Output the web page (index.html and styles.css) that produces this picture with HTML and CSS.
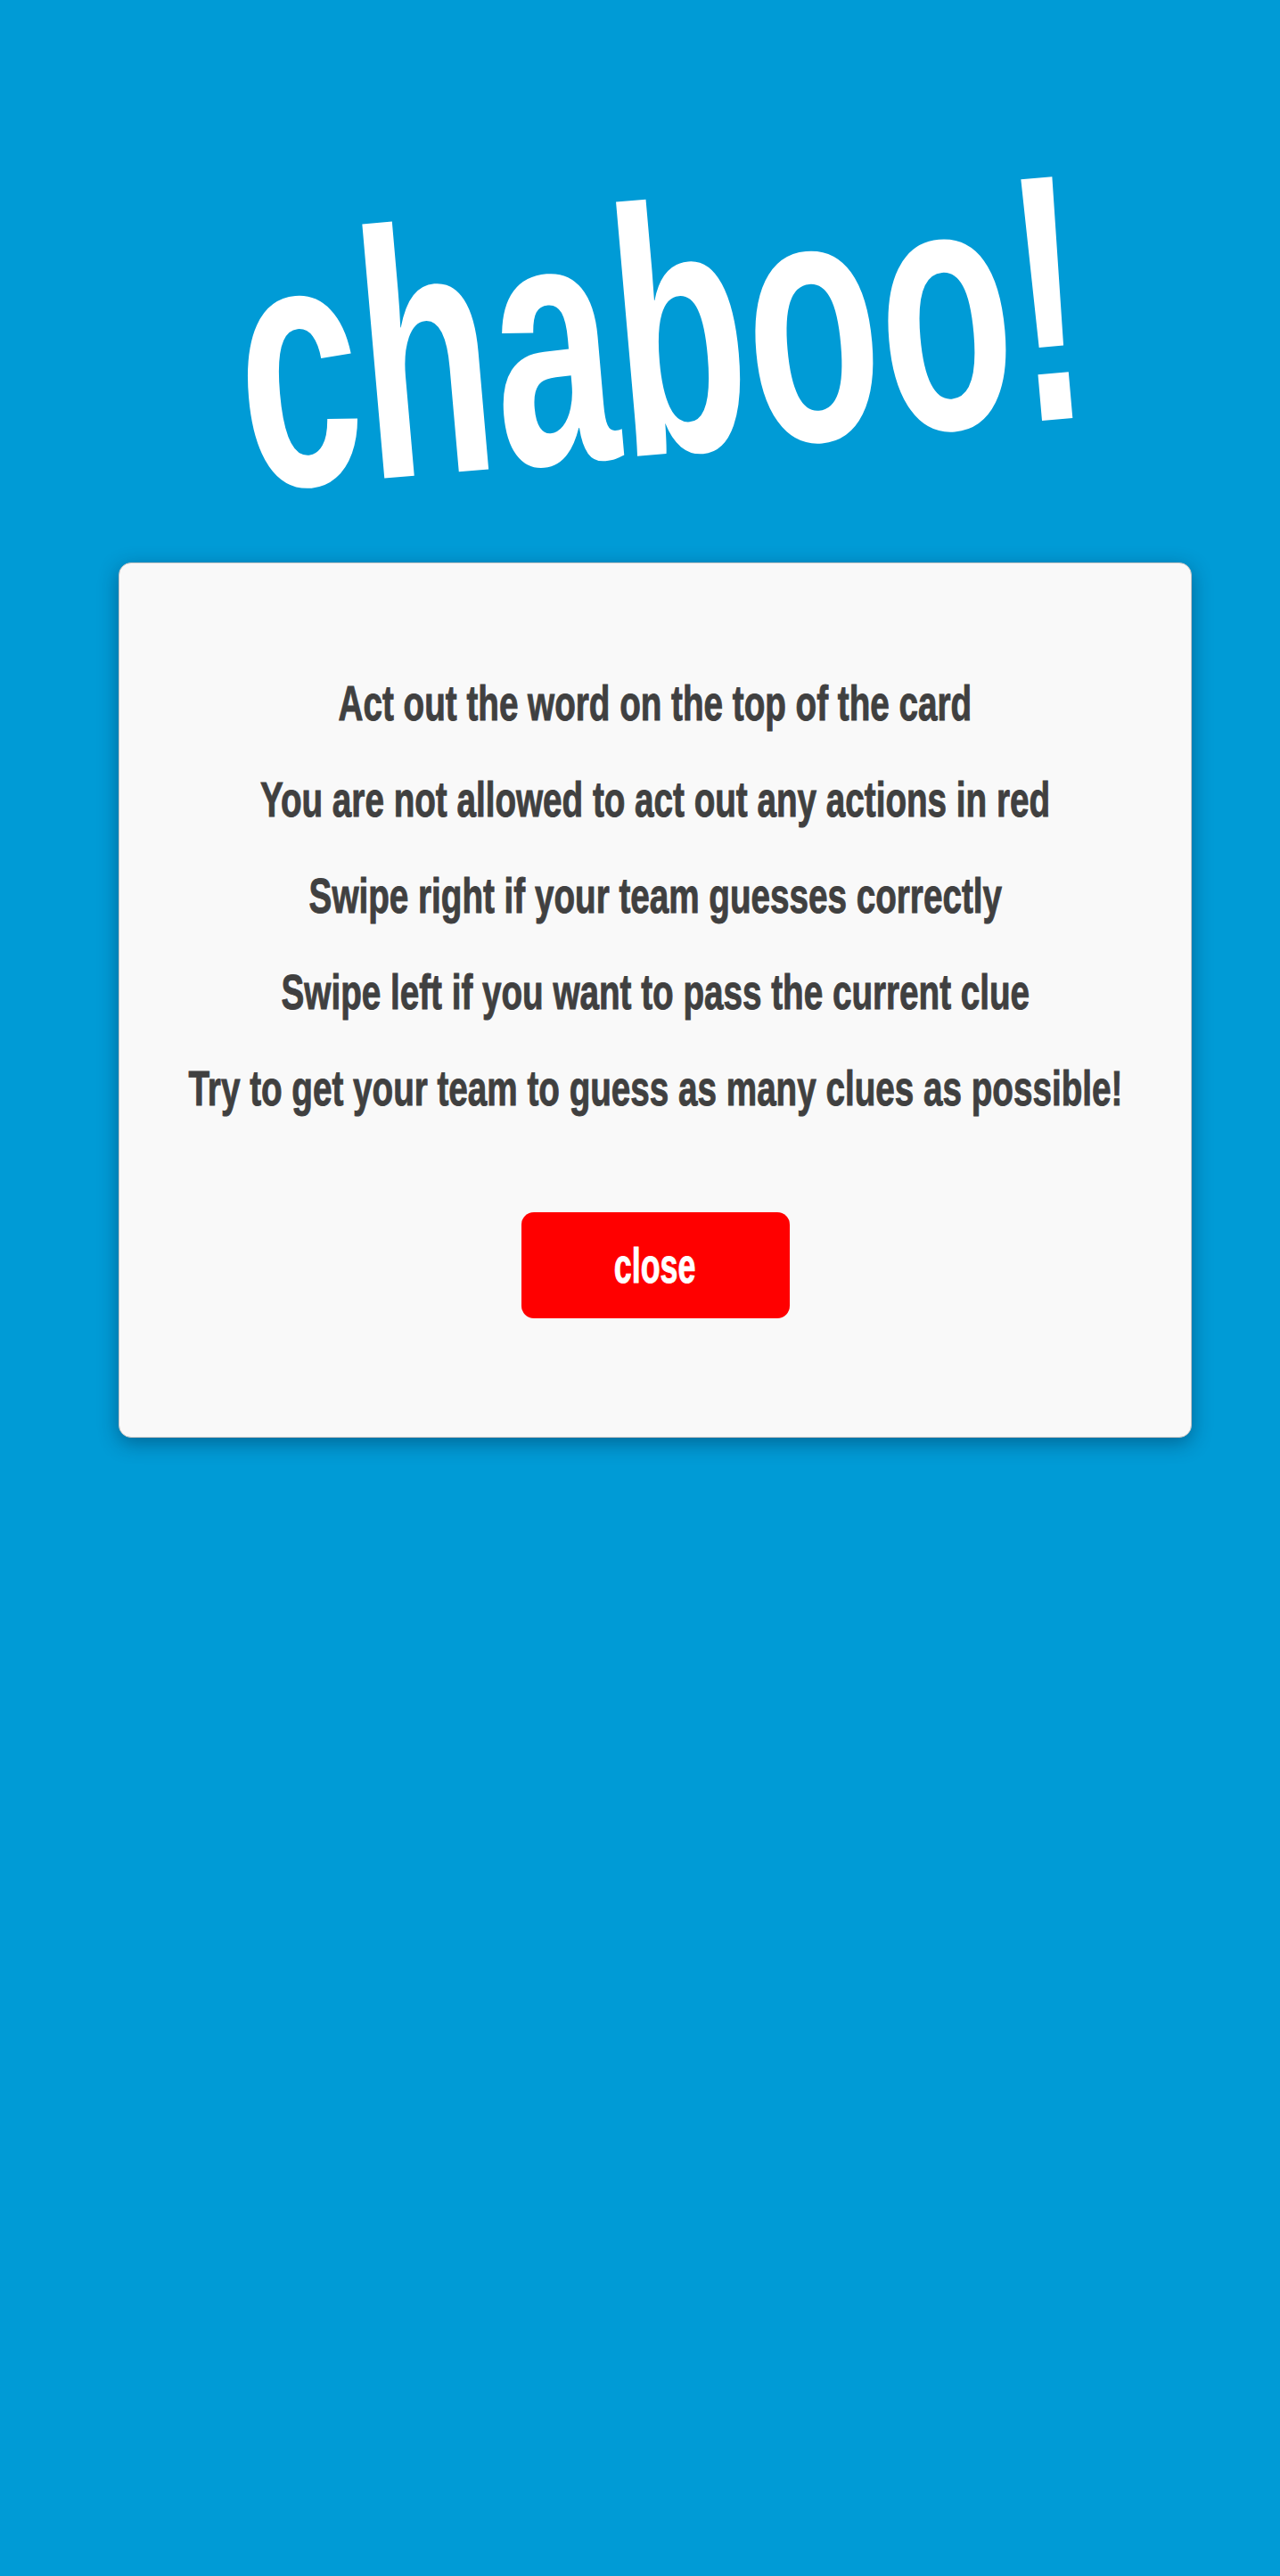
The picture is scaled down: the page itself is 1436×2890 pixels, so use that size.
FILE: index.html
```html
<!DOCTYPE html>
<html lang="en">
<head>
<meta charset="utf-8">
<title>chaboo!</title>
<link rel="stylesheet" href="styles.css">
</head>
<body>
<header class="masthead">
  <h1 class="logo">chaboo!</h1>
</header>
<main class="card">
  <div class="rules">
    <p class="rule">Act out the word on the top of the card</p>
    <p class="rule">You are not allowed to act out any actions in red</p>
    <p class="rule">Swipe right if your team guesses correctly</p>
    <p class="rule">Swipe left if you want to pass the current clue</p>
    <p class="rule">Try to get your team to guess as many clues as possible!</p>
  </div>
  <div class="actions">
    <button class="close-btn" type="button"><span class="close-label">close</span></button>
  </div>
</main>
</body>
</html>
```

FILE: styles.css
```css
html, body {
  margin: 0;
  padding: 0;
}
body {
  background: #009bd6;
  min-height: 2890px;
  font-family: "Liberation Sans", Arial, sans-serif;
}
.masthead {
  height: 631px;
  box-sizing: border-box;
  padding: 114px 0 0 46px;
  display: flex;
  align-items: center;
  justify-content: center;
}
.logo {
  margin: 0;
  color: #ffffff;
  font-size: 395px;
  font-weight: 700;
  line-height: 1;
  white-space: nowrap;
  transform: rotate(-5deg) scaleX(0.62);
}
.card {
  margin: 0 99px 0 133px;
  background: #f9f9f9;
  border: 1px solid #c4c4c4;
  border-radius: 14px;
  box-shadow: 0 6px 22px rgba(0, 30, 60, 0.42);
  display: flex;
  flex-direction: column;
  align-items: center;
  padding: 103px 0 133px;
}
.rules {
  width: 100%;
  display: flex;
  flex-direction: column;
  align-items: center;
}
.rule {
  margin: 0;
  color: #404040;
  font-size: 56px;
  font-weight: 700;
  line-height: 108px;
  white-space: nowrap;
  -webkit-text-stroke: 1px #404040;
  transform: scaleX(0.69);
}
.actions {
  margin-top: 85px;
}
.close-btn {
  display: flex;
  align-items: center;
  justify-content: center;
  width: 301px;
  height: 119px;
  padding: 0;
  border: none;
  border-radius: 14px;
  background: #ff0000;
  color: #ffffff;
  font-family: inherit;
  font-size: 56px;
  font-weight: 700;
}
.close-label {
  display: inline-block;
  -webkit-text-stroke: 1px #ffffff;
  transform: scaleX(0.64);
}
```
